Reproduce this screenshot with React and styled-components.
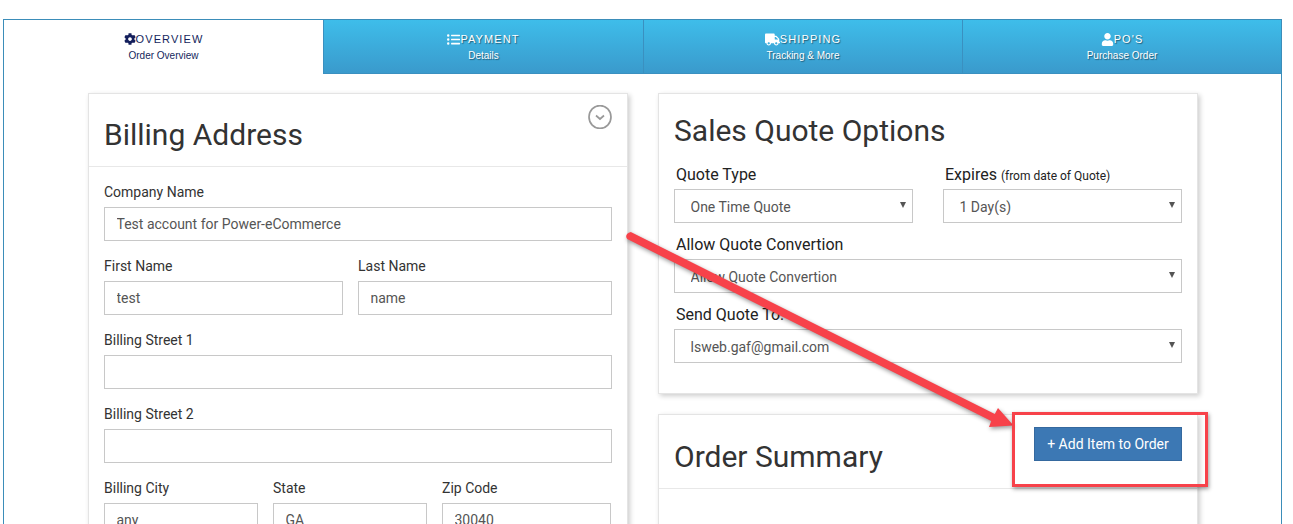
import React from "react"
import styled, { createGlobalStyle } from "styled-components"
import { FaCog, FaListUl, FaTruck, FaUser } from "react-icons/fa"

const tabs = [
  { icon: <FaCog />, size: 12, title: "OVERVIEW", sub: "Order Overview", active: true },
  { icon: <FaListUl />, size: 13, title: "PAYMENT", sub: "Details" },
  { icon: <FaTruck />, size: 15, title: "SHIPPING", sub: "Tracking & More" },
  { icon: <FaUser />, size: 13, title: "PO'S", sub: "Purchase Order" },
]

function Field({ label, value = "" }) {
  return (
    <FieldWrap>
      <Label>{label}</Label>
      <Input readOnly value={value} />
    </FieldWrap>
  )
}

function Choice({ label, hint, value }) {
  return (
    <FieldWrap>
      <ChoiceLabel>
        {label} {hint && <Hint>{hint}</Hint>}
      </ChoiceLabel>
      <SelectWrap>
        <Select value={value} onChange={() => {}}>
          <option>{value}</option>
        </Select>
      </SelectWrap>
    </FieldWrap>
  )
}

function App() {
  return (
    <Page>
      <GlobalStyle />
      <Frame>
        <TabBar>
          {tabs.map((tab) => (
            <Tab key={tab.title} $active={tab.active}>
              <TabTitle $icon={tab.size}>
                {tab.icon}
                {tab.title}
              </TabTitle>
              <TabSub>{tab.sub}</TabSub>
            </Tab>
          ))}
        </TabBar>
        <Columns>
          <Card>
            <BillingHeader>
              <Title>Billing Address</Title>
              <Toggle viewBox="0 0 24 24">
                <ellipse cx="12" cy="12" rx="11" ry="11.4" />
                <path d="M8 10.500l4 3.500 4-3.500" />
              </Toggle>
            </BillingHeader>
            <Form>
              <Field label="Company Name" value="Test account for Power-eCommerce" />
              <Row $cols="239px 254px">
                <Field label="First Name" value="test" />
                <Field label="Last Name" value="name" />
              </Row>
              <Field label="Billing Street 1" />
              <Field label="Billing Street 2" />
              <Row $cols="154px 154px 169px">
                <Field label="Billing City" value="any" />
                <Field label="State" value="GA" />
                <Field label="Zip Code" value="30040" />
              </Row>
            </Form>
          </Card>
          <RightColumn>
            <QuoteCard>
              <QuoteTitle>Sales Quote Options</QuoteTitle>
              <QuoteForm>
                <Row $cols="239px 239px" $gap="30px">
                  <Choice label="Quote Type" value="One Time Quote" />
                  <Choice label="Expires" hint="(from date of Quote)" value="1 Day(s)" />
                </Row>
                <Choice label="Allow Quote Convertion" value="Allow Quote Convertion" />
                <Choice label="Send Quote To:" value="lsweb.gaf@gmail.com" />
              </QuoteForm>
            </QuoteCard>
            <SummaryCard>
              <SummaryHeader>
                <SummaryTitle>Order Summary</SummaryTitle>
                <AddButton>+ Add Item to Order</AddButton>
              </SummaryHeader>
            </SummaryCard>
          </RightColumn>
        </Columns>
      </Frame>
      <Arrow viewBox="0 0 1293 524">
        <path d="M627.200 239.100 Q624 234 630.800 231.900 L994.800 413.900 L998 408 L1013.500 425.500 L989 427 L991.200 421.100 Z" />
      </Arrow>
      <Highlight />
    </Page>
  )
}

export default App

const GlobalStyle = createGlobalStyle`
  html, body {
    margin: 0;
    padding: 0;
    background: #fff;
  }
  * {
    box-sizing: border-box;
  }
`
const Page = styled.div`
  position: relative;
  width: 1293px;
  height: 524px;
  overflow: hidden;
  padding: 19px 11px 0 3px;
  font-family: Roboto, "Liberation Sans", sans-serif;
  color: #333;
`
const Frame = styled.div`
  border: 1px solid #3b8db9;
  border-bottom: 0;
  height: 600px;
`
const TabBar = styled.div`
  display: grid;
  grid-template-columns: 319px 320px 319px 319px;
  height: 54px;
`
const Tab = styled.div`
  display: flex;
  flex-direction: column;
  align-items: center;
  padding-top: 12px;
  font-family: "Liberation Sans", Arial, sans-serif;
  color: ${(p) => (p.$active ? "#141f5c" : "#fff")};
  background: ${(p) => (p.$active ? "#fff" : "linear-gradient(#3ebdea, #3a9acc)")};
  border-left: ${(p) => (p.$active ? "0" : "1px solid #3a90c0")};
  border-bottom: ${(p) => (p.$active ? "0" : "1px solid #3a90c0")};
  text-shadow: ${(p) => (p.$active ? "none" : "1px 1px 1px rgba(0, 0, 0, 0.45)")};
`
const TabTitle = styled.div`
  display: flex;
  align-items: center;
  height: 14px;
  font-size: 11px;
  line-height: 14px;
  letter-spacing: 1.1px;

  svg {
    width: ${(p) => p.$icon}px;
    height: ${(p) => p.$icon}px;
  }
`
const TabSub = styled.div`
  margin-top: 4px;
  font-size: 10px;
  line-height: 12px;
`
const Columns = styled.div`
  display: grid;
  grid-template-columns: 540px 540px;
  gap: 30px;
  padding: 19px 0 0 84px;
`
const Card = styled.div`
  background: #fff;
  border: 1px solid #e4e4e4;
  box-shadow: 2px 2px 5px rgba(0, 0, 0, 0.2);
`
const BillingHeader = styled.div`
  display: flex;
  justify-content: space-between;
  align-items: flex-start;
  height: 73px;
  padding: 11px 15px 0;
  border-bottom: 1px solid #e8e8e8;
`
const Title = styled.h2`
  margin: 9px 0 0;
  font-size: 30px;
  line-height: 42px;
  font-weight: 400;
  color: #333;
`
const Toggle = styled.svg`
  width: 24px;
  height: 24px;
  fill: none;
  stroke: #999;
  stroke-width: 1.7;
`
const Form = styled.div`
  display: flex;
  flex-direction: column;
  gap: 17px;
  padding: 17px 15px 0;
`
const Row = styled.div`
  display: grid;
  grid-template-columns: ${(p) => p.$cols};
  gap: ${(p) => p.$gap || "15px"};
`
const FieldWrap = styled.div`
  display: flex;
  flex-direction: column;
  min-width: 0;
`
const Label = styled.label`
  height: 17px;
  margin-bottom: 6px;
  font-size: 14px;
  line-height: 17px;
  color: #333;
`
const Input = styled.input`
  display: block;
  width: 100%;
  height: 34px;
  padding: 0 11.5px;
  border: 1px solid #c8c8c8;
  border-radius: 0;
  outline: 0;
  background: #fff;
  font: 14px Roboto, sans-serif;
  color: #555;
`
const RightColumn = styled.div`
  display: flex;
  flex-direction: column;
  gap: 20px;
`
const QuoteCard = styled(Card)`
  height: 301px;
  padding: 15px;
`
const QuoteTitle = styled.h2`
  margin: 0;
  font-size: 30px;
  line-height: 44px;
  font-weight: 400;
  color: #333;
`
const QuoteForm = styled.div`
  display: flex;
  flex-direction: column;
  gap: 12px;
  margin-top: 12px;
`
const ChoiceLabel = styled.label`
  height: 20px;
  margin: 0 0 4px 2px;
  font-size: 16px;
  line-height: 20px;
  color: #222;
`
const Hint = styled.span`
  font-size: 12px;
`
const SelectWrap = styled.div`
  position: relative;

  &::after {
    content: "";
    position: absolute;
    top: 13px;
    right: 7px;
    border-left: 3px solid transparent;
    border-right: 3px solid transparent;
    border-top: 6px solid #555;
  }
`
const Select = styled.select`
  display: block;
  width: 100%;
  height: 34px;
  padding: 2px 15.5px 0;
  appearance: none;
  border: 1px solid #c8c8c8;
  border-radius: 0;
  outline: 0;
  background: #fff;
  font: 14px Roboto, sans-serif;
  color: #555;
`
const SummaryCard = styled(Card)`
  height: 200px;
`
const SummaryHeader = styled.div`
  display: flex;
  justify-content: space-between;
  align-items: flex-start;
  height: 74px;
  padding: 12px 15px 0;
  border-bottom: 1px solid #e8e8e8;
`
const SummaryTitle = styled.h2`
  margin: 8px 0 0;
  font-size: 30px;
  line-height: 44px;
  font-weight: 400;
  color: #333;
`
const AddButton = styled.button`
  width: 148px;
  height: 34px;
  border: 1px solid #35699f;
  border-radius: 0;
  background: #3c78b4;
  color: #fff;
  font: 14px Roboto, sans-serif;
`
const Arrow = styled.svg`
  position: absolute;
  top: 0;
  left: 0;
  width: 1293px;
  height: 524px;
  fill: #f7424a;
  filter: drop-shadow(1px 2px 2px rgba(0, 0, 0, 0.4));
  pointer-events: none;
`
const Highlight = styled.div`
  position: absolute;
  top: 412px;
  left: 1012px;
  width: 196px;
  height: 75px;
  border: 3px solid #f7424a;
  box-shadow: 1px 2px 4px rgba(0, 0, 0, 0.4);
  pointer-events: none;
`
